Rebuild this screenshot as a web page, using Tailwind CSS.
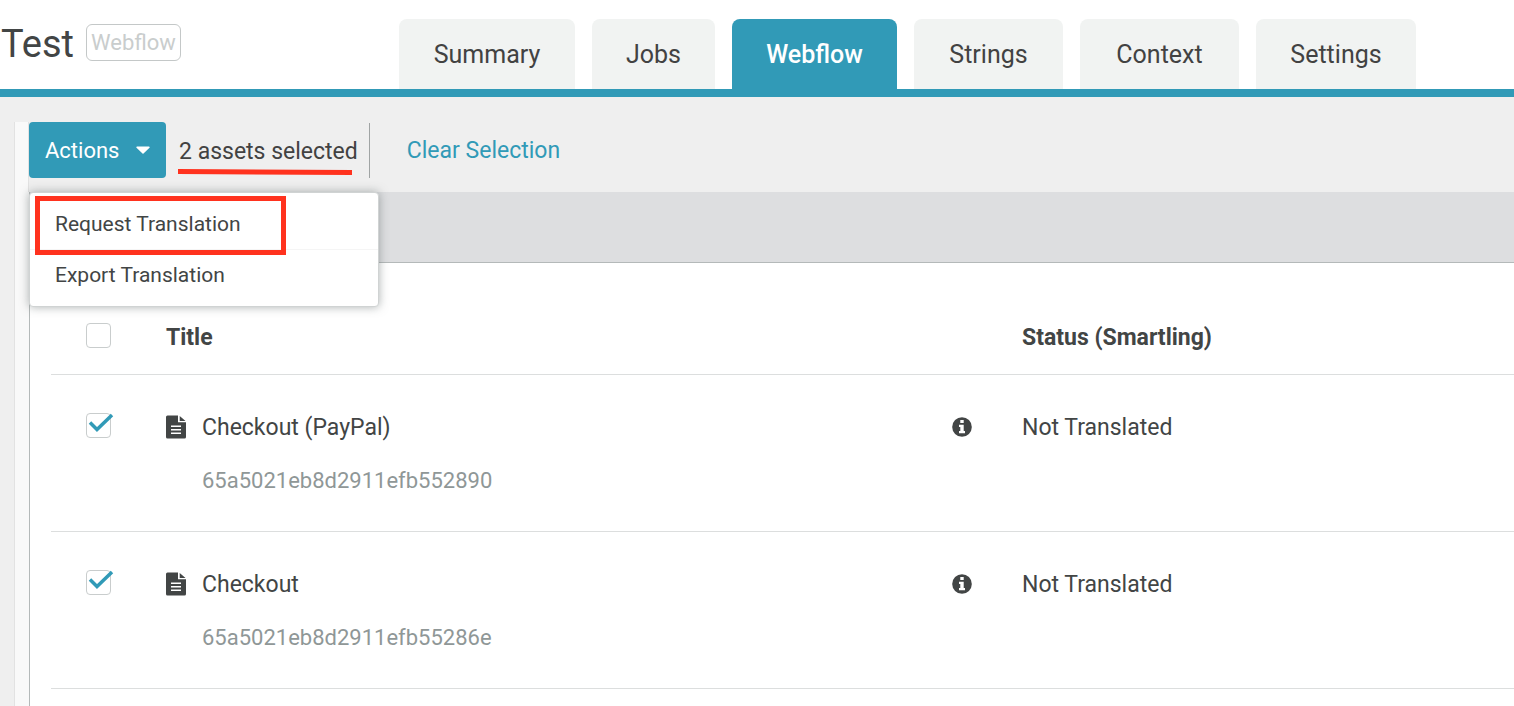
<!DOCTYPE html>
<html lang="en">
<head>
    <meta charset="UTF-8">
    <meta name="viewport" content="width=device-width, initial-scale=1.0">
    <title>Test - Webflow</title>
    <script src="https://cdn.jsdelivr.net/npm/@tailwindcss/browser@4"></script>
</head>
<body class="min-h-screen flex flex-col overflow-hidden bg-[#efefef] font-[Roboto,'Liberation_Sans',sans-serif] text-[23px] text-[#424545]">
    <!-- Icons -->
    <svg class="hidden">
        <symbol id="icon-file" viewBox="0 0 20 24">
            <path fill="currentColor" d="M1.5 0.5H12V7.2H20V22a1.500 1.500 0 0 1-1.500 1.500H1.500A1.500 1.500 0 0 1 0 22V2A1.500 1.500 0 0 1 1.500 0.500ZM13.700 1L19.500 6H13.700Z"/>
            <path stroke="#fff" stroke-width="1.500" d="M5 11.200h10M5 14.700h10M5 18.200h10"/>
        </symbol>
        <symbol id="icon-info" viewBox="0 0 20 20">
            <circle cx="10" cy="10" r="9.800" fill="currentColor"/>
            <path fill="#fff" d="M8.300 3h3.400v3H8.300ZM7 7.700h4.700v6.300H13v2.300H7V14h1.300V10H7Z"/>
        </symbol>
        <symbol id="icon-check" viewBox="0 0 26 20">
            <path fill="none" stroke="#319ab7" stroke-width="3.500" d="M2 9.500L9 16.500L24 2"/>
        </symbol>
    </svg>

    <header class="flex items-end justify-between border-b-8 border-[#319ab7] bg-white pt-[19px]">
        <div class="flex items-start self-start gap-3 pl-px">
            <h1 class="text-[38px] leading-[50px]">Test</h1>
            <span class="mt-[5px] rounded-md border border-[#c4c8c8] px-1 text-[22px] leading-[35px] text-[#c9cdcd]">Webflow</span>
        </div>
        <nav class="flex gap-[17px] pr-[98px] text-[25px] text-[#424242]">
            <a href="#" class="flex h-[70px] w-[176px] items-center justify-center rounded-t-lg bg-[#f1f3f2] pt-0.5">Summary</a>
            <a href="#" class="flex h-[70px] w-[123px] items-center justify-center rounded-t-lg bg-[#f1f3f2] pt-0.5">Jobs</a>
            <a href="#" class="flex h-[70px] w-[165px] items-center justify-center rounded-t-lg bg-[#319ab7] pt-0.5 font-medium text-white">Webflow</a>
            <a href="#" class="flex h-[70px] w-[149px] items-center justify-center rounded-t-lg bg-[#f1f3f2] pt-0.5">Strings</a>
            <a href="#" class="flex h-[70px] w-[159px] items-center justify-center rounded-t-lg bg-[#f1f3f2] pt-0.5">Context</a>
            <a href="#" class="flex h-[70px] w-[160px] items-center justify-center rounded-t-lg bg-[#f1f3f2] pt-0.5">Settings</a>
        </nav>
    </header>

    <main class="mt-[25px] ml-3.5 flex flex-1 flex-col border-l border-[#e2e2e2] bg-[#f9f9f9] pl-[13px]">
        <!-- Toolbar -->
        <div class="flex h-[70px] items-start border-l border-[#e2e2e2] bg-[#efefef]">
            <div class="relative">
                <button type="button" class="flex h-14 w-[137px] items-center justify-between rounded bg-[#319ab7] px-4 text-[22px] text-white">
                    Actions
                    <svg class="h-2 w-3.5" viewBox="0 0 14 8"><path fill="currentColor" d="M1 0.500h12a.7.7 0 0 1 .5 1.200L7.500 7.500a.7.7 0 0 1-1 0L.5 1.700A.7.7 0 0 1 1 .5Z"/></svg>
                </button>
                <!-- Actions menu -->
                <div class="absolute top-[70px] left-0 w-[350px] rounded border border-[#d0d3d3] bg-white pb-2 text-[21px] shadow-[0_0_10px_rgba(90,100,100,0.5)]">
                    <button type="button" class="block h-[57px] w-full border-b border-[#f5f5f5] pt-2 pl-[25px] text-left">Request Translation</button>
                    <button type="button" class="block h-12 w-full pt-1 pl-[25px] text-left">Export Translation</button>
                    <div class="absolute top-[3px] left-[5px] h-[59px] w-[251px] border-5 border-[#ff321e]"></div>
                </div>
            </div>
            <div class="relative mt-px flex h-[55px] items-center border-r border-[#a0a4a4] pt-[3px] pr-[11px] pl-[13px] text-[#424242]">
                2 assets selected
                <svg class="absolute bottom-0.5 left-3 h-2 w-[174px]" viewBox="0 0 174 8" preserveAspectRatio="none"><path stroke="#ff321e" stroke-width="5" d="M0 3.500L174 4.500"/></svg>
            </div>
            <button type="button" class="h-14 pt-0.5 pl-[37px] text-[#319ab7]">Clear Selection</button>
        </div>

        <!-- Assets -->
        <section class="ml-px flex-1 border-l border-[#b4b9b9] bg-white">
            <div class="h-[71px] border-b border-[#b4b9b9] bg-[#dddee0]"></div>
            <div class="pl-[21px]">
                <table class="w-full table-fixed text-left">
                    <colgroup>
                        <col class="w-[115px]">
                        <col class="w-[786px]">
                        <col class="w-[70px]">
                        <col>
                    </colgroup>
                    <thead>
                        <tr class="border-b border-[#dcdede] align-top">
                            <th class="pt-[60px] pl-[35px]"><input type="checkbox" aria-label="Select all assets" class="block size-[25px] appearance-none rounded border border-[#c9cdcd] bg-white"></th>
                            <th class="pt-[59px] pb-5 leading-8">Title</th>
                            <th></th>
                            <th class="pt-[59px] pb-5 leading-8">Status (Smartling)</th>
                        </tr>
                    </thead>
                    <tbody>
                        <tr class="border-b border-[#dcdede] align-top">
                            <td class="pt-[38px] pl-[35px]">
                                <div class="relative size-[25px]">
                                    <input type="checkbox" checked aria-label="Select Checkout (PayPal)" class="block size-[25px] appearance-none rounded border border-[#c9cdcd] bg-white">
                                    <svg class="pointer-events-none absolute top-0 left-0.5 h-5 w-[26px]"><use href="#icon-check"/></svg>
                                </div>
                            </td>
                            <td class="pt-[37px] pb-[34px] leading-8">
                                <div class="flex items-start gap-4"><svg class="mt-[3px] h-6 w-5"><use href="#icon-file"/></svg>Checkout (PayPal)</div>
                                <div class="mt-[21px] pl-9 text-[22px] text-[#8f9797]">65a5021eb8d2911efb552890</div>
                            </td>
                            <td class="pt-[42px]"><svg class="size-5"><use href="#icon-info"/></svg></td>
                            <td class="pt-[37px] leading-8">Not Translated</td>
                        </tr>
                        <tr class="border-b border-[#dcdede] align-top">
                            <td class="pt-[38px] pl-[35px]">
                                <div class="relative size-[25px]">
                                    <input type="checkbox" checked aria-label="Select Checkout" class="block size-[25px] appearance-none rounded border border-[#c9cdcd] bg-white">
                                    <svg class="pointer-events-none absolute top-0 left-0.5 h-5 w-[26px]"><use href="#icon-check"/></svg>
                                </div>
                            </td>
                            <td class="pt-[37px] pb-[34px] leading-8">
                                <div class="flex items-start gap-4"><svg class="mt-[3px] h-6 w-5"><use href="#icon-file"/></svg>Checkout</div>
                                <div class="mt-[21px] pl-9 text-[22px] text-[#8f9797]">65a5021eb8d2911efb55286e</div>
                            </td>
                            <td class="pt-[42px]"><svg class="size-5"><use href="#icon-info"/></svg></td>
                            <td class="pt-[37px] leading-8">Not Translated</td>
                        </tr>
                    </tbody>
                </table>
            </div>
        </section>
    </main>
</body>
</html>
